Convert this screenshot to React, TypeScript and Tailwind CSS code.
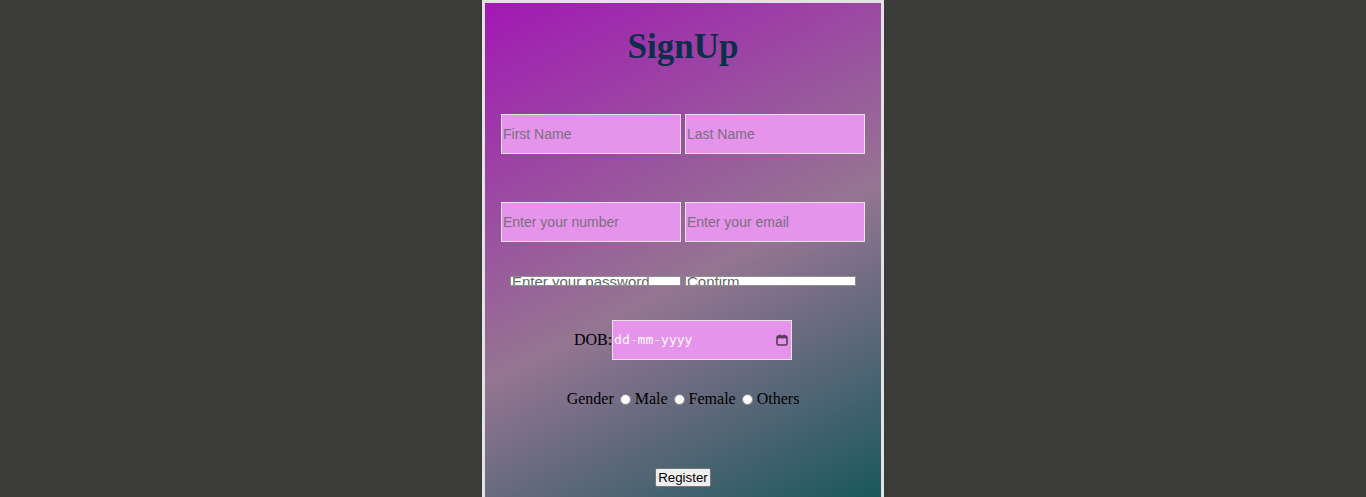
export default function App() {
  const field =
    "w-[180px] h-[40px] bg-[#e693ec] border border-[#e4e4e4] px-[1px] text-[14px] text-black placeholder:text-[#7b6f80] outline-none";
  const pass =
    "w-[171px] h-[10px] bg-white border border-[#8f8f8f] px-[1px] text-[15px] leading-[10px] text-black placeholder:text-[#666] outline-none";

  return (
    <div className="w-full h-[497px] overflow-hidden bg-[#3b3b39] flex justify-center">
      <div
        className="w-[402px] h-[564px] shrink-0 border-[3px] border-[#e3e3e3] bg-[linear-gradient(153deg,#a218b4,#957592,#005252)] flex flex-col items-center"
        style={{ fontFamily: '"Liberation Serif", "Times New Roman", serif' }}
      >
        <h1 className="mt-[24px] text-[35px] leading-[40px] font-bold text-[#0c2e4a]">SignUp</h1>

        <div
          className="mt-[47px] flex gap-[4px]"
          style={{ fontFamily: '"Liberation Sans", Arial, sans-serif' }}
        >
          <input className={field} placeholder="First Name" />
          <input className={field} placeholder="Last Name" />
        </div>

        <div
          className="mt-[48px] flex gap-[4px]"
          style={{ fontFamily: '"Liberation Sans", Arial, sans-serif' }}
        >
          <input className={field} placeholder="Enter your number" />
          <input className={field} placeholder="Enter your email" />
        </div>

        <div
          className="mt-[34px] flex gap-[4px]"
          style={{ fontFamily: '"Liberation Sans", Arial, sans-serif' }}
        >
          <input type="password" className={pass} placeholder="Enter your password" />
          <input type="password" className={pass} placeholder="Confirm" />
        </div>

        <div className="mt-[34px] flex items-center">
          <span className="text-[16px] text-black">DOB:</span>
          <div className="w-[180px] h-[40px] bg-[#e693ec] border border-[#e4e4e4] flex items-center pl-[1px] pr-[3px]">
            <span
              className="flex-1 text-[13px] text-white"
              style={{ fontFamily: '"DejaVu Sans Mono", "Liberation Mono", monospace' }}
            >
              dd-mm-yyyy
            </span>
            <svg width="12" height="12" viewBox="0 0 12 12" fill="none">
              <rect x="1" y="2" width="10" height="9" rx="1.2" stroke="#5a3a5e" strokeWidth="1.6" />
              <rect x="1" y="2" width="10" height="2.4" fill="#5a3a5e" />
              <rect x="3" y="0.5" width="1.4" height="2" fill="#5a3a5e" />
              <rect x="7.6" y="0.5" width="1.4" height="2" fill="#5a3a5e" />
            </svg>
          </div>
        </div>

        <div className="mt-[30px] flex items-center text-[16px] leading-[18px] text-black">
          <span>Gender</span>
          <input type="radio" name="g" className="w-[11px] h-[11px] ml-[6px] mr-[4px] accent-white" />
          <span>Male</span>
          <input type="radio" name="g" className="w-[11px] h-[11px] ml-[6px] mr-[4px] accent-white" />
          <span>Female</span>
          <input type="radio" name="g" className="w-[11px] h-[11px] ml-[6px] mr-[4px] accent-white" />
          <span>Others</span>
        </div>

        <button
          className="mt-[60px] h-[19px] px-[2px] bg-[#efefef] border border-[#767676] rounded-[2px] text-[13.33px] leading-[15px] text-black"
          style={{ fontFamily: '"Liberation Sans", Arial, sans-serif' }}
        >
          Register
        </button>
      </div>
    </div>
  );
}
